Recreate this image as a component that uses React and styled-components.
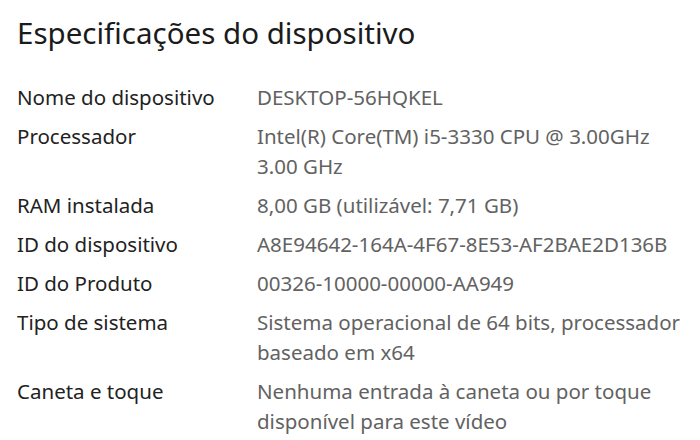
import React from 'react';
import styled, { createGlobalStyle } from 'styled-components';

const GlobalStyle = createGlobalStyle`
  html, body {
    margin: 0;
    padding: 0;
    background: #ffffff;
  }
  body {
    font-family: 'Noto Sans', 'Open Sans', 'Liberation Sans', sans-serif;
  }
`;

const Page = styled.div`
  width: 700px;
  height: 440px;
  overflow: hidden;
  padding: 13px 0 0 17px;
  box-sizing: border-box;
  background: #fff;
`;

const Title = styled.h1`
  margin: 0 0 29px 0;
  font-size: 29.5px;
  font-weight: 400;
  color: #1b1b1b;
  line-height: 40px;
`;

const SpecList = styled.dl`
  margin: 0;
  display: grid;
  grid-template-columns: 240px 432px;
  row-gap: 9px;
  font-size: 20.5px;
  line-height: 30px;
`;

const Label = styled.dt`
  margin: 0;
  color: #222;
`;

const Value = styled.dd`
  margin: 0;
  color: #626262;
`;

const specs = [
  ['Nome do dispositivo', 'DESKTOP-56HQKEL'],
  ['Processador', 'Intel(R) Core(TM) i5-3330 CPU @ 3.00GHz 3.00 GHz'],
  ['RAM instalada', '8,00 GB (utilizável: 7,71 GB)'],
  ['ID do dispositivo', 'A8E94642-164A-4F67-8E53-AF2BAE2D136B'],
  ['ID do Produto', '00326-10000-00000-AA949'],
  ['Tipo de sistema', 'Sistema operacional de 64 bits, processador baseado em x64'],
  ['Caneta e toque', 'Nenhuma entrada à caneta ou por toque disponível para este vídeo'],
];

export default function App() {
  return (
    <Page>
      <GlobalStyle />
      <Title>Especificações do dispositivo</Title>
      <SpecList>
        {specs.map(([label, value]) => (
          <React.Fragment key={label}>
            <Label>{label}</Label>
            <Value>{value}</Value>
          </React.Fragment>
        ))}
      </SpecList>
    </Page>
  );
}
